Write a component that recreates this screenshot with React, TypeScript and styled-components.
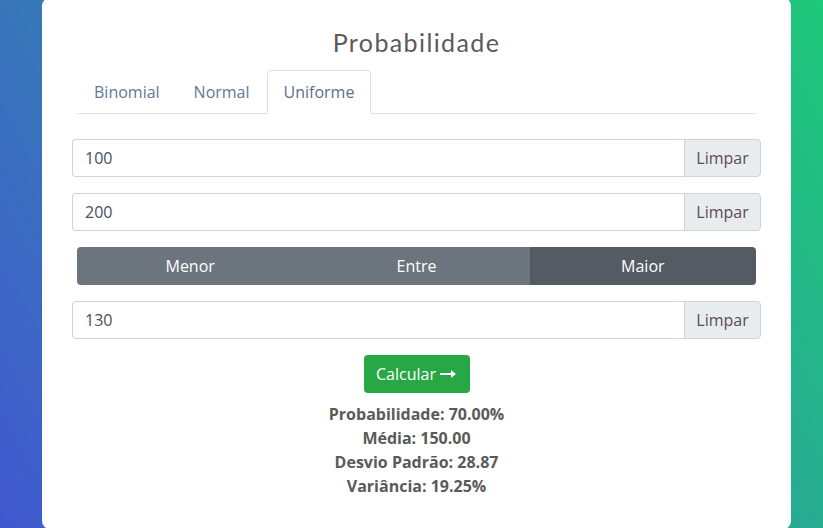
import React, { useState } from "react";
import styled, { createGlobalStyle } from "styled-components";

const Global = createGlobalStyle`
  html, body { margin: 0; padding: 0; height: 100%; overflow: hidden; }
  body {
    background: linear-gradient(62deg, #4158d0 0%, #1ec97a 100%);
    font-family: "Open Sans", "Liberation Sans", sans-serif;
    color: #495057;
  }
`;

const Page = styled.div`
  width: 823px;
  height: 528px;
  overflow: hidden;
`;

const Card = styled.div`
  margin: -2px 0 0 42px;
  width: 749px;
  height: 531px;
  box-sizing: border-box;
  background: #fff;
  border-radius: 8px;
  padding: 22px 30px 0;
  display: flex;
  flex-direction: column;
`;

const Title = styled.h1`
  margin: 0 0 6px;
  text-align: center;
  font-family: "Lato", "Open Sans", sans-serif;
  font-weight: 400;
  font-size: 25px;
  letter-spacing: 1.4px;
  line-height: 44px;
  color: #5a5a5a;
`;

const Tabs = styled.div`
  display: flex;
  margin: 0 5px 25px;
  border-bottom: 1px solid #dee2e6;
`;

const Tab = styled.div<{ $active?: boolean }>`
  padding: 9px 16px 9px;
  font-size: 16px;
  line-height: 24px;
  margin-bottom: -1px;
  border: 1px solid ${(p) => (p.$active ? "#dee2e6" : "transparent")};
  border-bottom-color: ${(p) => (p.$active ? "#fff" : "transparent")};
  border-radius: 4px 4px 0 0;
  background: ${(p) => (p.$active ? "#fff" : "transparent")};
  color: ${(p) => (p.$active ? "#5d6f88" : "#667892")};
  cursor: pointer;
`;

const Group = styled.div`
  display: flex;
  height: 38px;
  margin-bottom: 16px;
`;

const Input = styled.input`
  flex: 1;
  min-width: 0;
  box-sizing: border-box;
  height: 38px;
  border: 1px solid #ced4da;
  border-right: none;
  border-radius: 4px 0 0 4px;
  padding: 6px 12px;
  font-family: "Open Sans", sans-serif;
  font-size: 16px;
  color: #495057;
  outline: none;
`;

const Addon = styled.button`
  width: 77px;
  box-sizing: border-box;
  border: 1px solid #ced4da;
  border-radius: 0 4px 4px 0;
  background: #e9ecef;
  font-family: "Open Sans", sans-serif;
  font-size: 16px;
  color: #5b4b57;
  padding: 0;
`;

const Toggle = styled.div`
  display: flex;
  margin: 0 5px 16px;
  height: 38px;
  border-radius: 4px;
  overflow: hidden;
`;

const ToggleBtn = styled.button<{ $active?: boolean }>`
  flex: 1;
  border: none;
  background: ${(p) => (p.$active ? "#545b62" : "#6c757d")};
  color: #fff;
  font-family: "Open Sans", sans-serif;
  font-size: 16px;
  padding: 0;
`;

const Center = styled.div`
  display: flex;
  flex-direction: column;
  align-items: center;
`;

const CalcBtn = styled.button`
  height: 38px;
  width: 106px;
  border: none;
  border-radius: 4px;
  background: #28a745;
  color: #fff;
  font-family: "Open Sans", sans-serif;
  font-size: 16px;
  padding: 0;
  margin-bottom: 9px;
  display: flex;
  align-items: center;
  justify-content: center;
  gap: 4px;
`;

const Result = styled.div`
  font-weight: 700;
  font-size: 16px;
  line-height: 24px;
  color: #5a5a5a;
  text-align: center;
`;

const Arrow = () => (
  <svg width="17" height="10" viewBox="0 0 17 10">
    <path d="M0 4h13v2H0z M11 1l5 4-5 4z" fill="#fff" />
  </svg>
);

export default function App() {
  const [mode, setMode] = useState("Maior");
  return (
    <Page>
      <Global />
      <Card>
        <Title>Probabilidade</Title>
        <Tabs>
          <Tab>Binomial</Tab>
          <Tab>Normal</Tab>
          <Tab $active>Uniforme</Tab>
        </Tabs>
        <Group>
          <Input defaultValue="100" />
          <Addon>Limpar</Addon>
        </Group>
        <Group>
          <Input defaultValue="200" />
          <Addon>Limpar</Addon>
        </Group>
        <Toggle>
          {["Menor", "Entre", "Maior"].map((m) => (
            <ToggleBtn key={m} $active={mode === m} onClick={() => setMode(m)}>
              {m}
            </ToggleBtn>
          ))}
        </Toggle>
        <Group>
          <Input defaultValue="130" />
          <Addon>Limpar</Addon>
        </Group>
        <Center>
          <CalcBtn>
            Calcular <Arrow />
          </CalcBtn>
          <Result>Probabilidade: 70.00%</Result>
          <Result>Média: 150.00</Result>
          <Result>Desvio Padrão: 28.87</Result>
          <Result>Variância: 19.25%</Result>
        </Center>
      </Card>
    </Page>
  );
}
